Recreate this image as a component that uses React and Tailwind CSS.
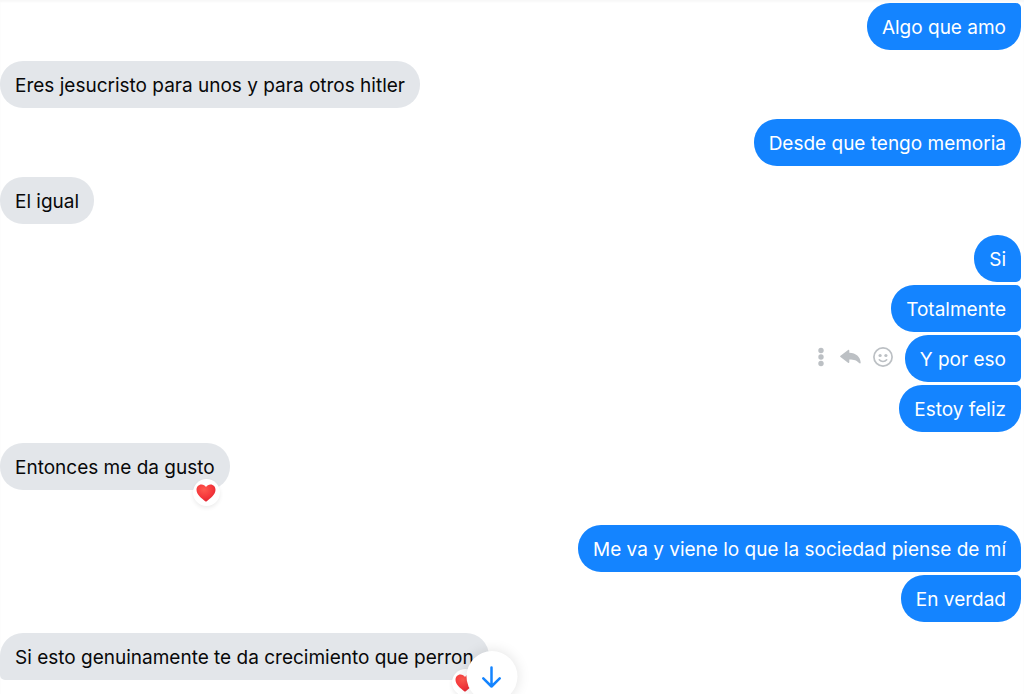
import { useId } from "react";

const groups = [
  { from: "me", messages: [{ text: "Algo que amo", corners: "rounded-tr-[5px]" }] },
  { from: "them", messages: [{ text: "Eres jesucristo para unos y para otros hitler" }] },
  { from: "me", messages: [{ text: "Desde que tengo memoria" }] },
  { from: "them", messages: [{ text: "El igual" }] },
  {
    from: "me",
    messages: [
      { text: "Si", corners: "rounded-br-[5px]" },
      { text: "Totalmente", corners: "rounded-r-[5px]" },
      { text: "Y por eso", corners: "rounded-r-[5px]", actions: true },
      { text: "Estoy feliz", corners: "rounded-tr-[5px]" },
    ],
  },
  { from: "them", messages: [{ text: "Entonces me da gusto", reaction: true }] },
  {
    from: "me",
    messages: [
      { text: "Me va y viene lo que la sociedad piense de mí", corners: "rounded-br-[5px]" },
      { text: "En verdad", corners: "rounded-tr-[5px]" },
    ],
  },
  {
    from: "them",
    messages: [
      {
        text: "Si esto genuinamente te da crecimiento que perron",
        corners: "rounded-bl-[5px]",
        reaction: true,
      },
    ],
  },
];

function Heart() {
  const id = useId();
  return (
    <svg viewBox="0 0 20 18" className="h-[18px] w-5" aria-hidden="true">
      <defs>
        <radialGradient id={id} cx="0.4" cy="0.3" r="0.75">
          <stop offset="0" stopColor="#ff5a4f" />
          <stop offset="0.6" stopColor="#f5373b" />
          <stop offset="1" stopColor="#dc2430" />
        </radialGradient>
      </defs>
      <path
        fill={`url(#${id})`}
        d="M10 3.1C9 1.3 7.400.4 5.500.4 2.600.4.5 2.700.5 5.800c0 4.800 4.900 8.700 9.500 11.900 4.600-3.200 9.500-7.100 9.500-11.900 0-3.100-2.100-5.400-5-5.400-1.900 0-3.500.9-4.500 2.700z"
      />
    </svg>
  );
}

function Actions() {
  return (
    <div className="mr-3 flex items-center pb-[3px] text-[#bcc0c4]">
      <button type="button" aria-label="Más" className="mr-4 block">
        <svg viewBox="0 0 6 20" className="h-5 w-1.5" fill="currentColor">
          <circle cx="3" cy="3.500" r="2.700" />
          <circle cx="3" cy="10" r="2.700" />
          <circle cx="3" cy="16.500" r="2.700" />
        </svg>
      </button>
      <button type="button" aria-label="Responder" className="mr-3 block">
        <svg viewBox="0 0 21 16" className="h-4 w-[21px]" fill="currentColor">
          <path d="M.5 6.700 8.100.9c.6-.4 1.200-.1 1.200.6v2.300c6.700.2 10.900 3.900 11.400 9.800.1 1.100-1 1.300-1.600.5-2.200-2.700-4.900-3.600-9.800-3.600v2.700c0 .8-.7 1.100-1.300.6L.5 8.100c-.5-.4-.5-1 0-1.400z" />
        </svg>
      </button>
      <button type="button" aria-label="Reaccionar" className="block">
        <svg viewBox="0 0 20 20" className="size-5" fill="none" stroke="currentColor">
          <circle cx="10" cy="10" r="9.100" strokeWidth="1.700" />
          <circle cx="7.100" cy="8.500" r="1.600" fill="currentColor" stroke="none" />
          <circle cx="12.900" cy="8.500" r="1.600" fill="currentColor" stroke="none" />
          <path d="M6.300 12.800c1.900 2.200 5.500 2.200 7.400 0" strokeWidth="1.600" strokeLinecap="round" />
        </svg>
      </button>
    </div>
  );
}

function Message({ message, mine }) {
  const color = mine ? "bg-[#1484ff] text-white" : "bg-[#e3e6ea] text-[#080809]";
  return (
    <li className={`flex items-center ${mine ? "justify-end" : "justify-start"}`}>
      {message.actions && <Actions />}
      <div className="relative">
        <p className={`rounded-[23px] px-[15px] pt-3 pb-2.5 text-[19px] leading-[25px] ${color} ${message.corners || ""}`}>
          {message.text}
        </p>
        {message.reaction && (
          <span
            role="img"
            aria-label="Me encanta"
            className="absolute right-2.5 -bottom-4 flex size-[27px] items-center justify-center rounded-full bg-white shadow-[0_2px_4px_rgba(0,0,0,0.08)]"
          >
            <Heart />
          </span>
        )}
      </div>
    </li>
  );
}

export default function App() {
  return (
    <main className="relative h-screen overflow-hidden bg-white font-['Inter','Liberation_Sans',sans-serif]">
      <div className="flex flex-col gap-[11px] pt-[3px] pr-[3px] shadow-[inset_0_2px_2px_rgba(0,0,0,0.03)]">
        {groups.map((group, i) => (
          <ul
            key={i}
            className={`flex flex-col gap-[3px] ${group.messages.some((m) => m.reaction) ? "pb-6" : ""}`}
          >
            {group.messages.map((message) => (
              <Message key={message.text} message={message} mine={group.from === "me"} />
            ))}
          </ul>
        ))}
      </div>
      <button
        type="button"
        aria-label="Ir al final"
        className="absolute -bottom-2 left-[48%] flex size-[51px] -translate-x-1/2 items-center justify-center rounded-full bg-white text-[#1484ff] shadow-[0_0_14px_rgba(0,0,0,0.12)]"
      >
        <svg
          viewBox="0 0 20 22"
          className="h-[22px] w-5"
          fill="none"
          stroke="currentColor"
          strokeWidth="2.500"
          strokeLinecap="round"
          strokeLinejoin="round"
        >
          <path d="M10 1.500v19M1.800 12.300l8.200 8.200 8.200-8.200" />
        </svg>
      </button>
    </main>
  );
}
